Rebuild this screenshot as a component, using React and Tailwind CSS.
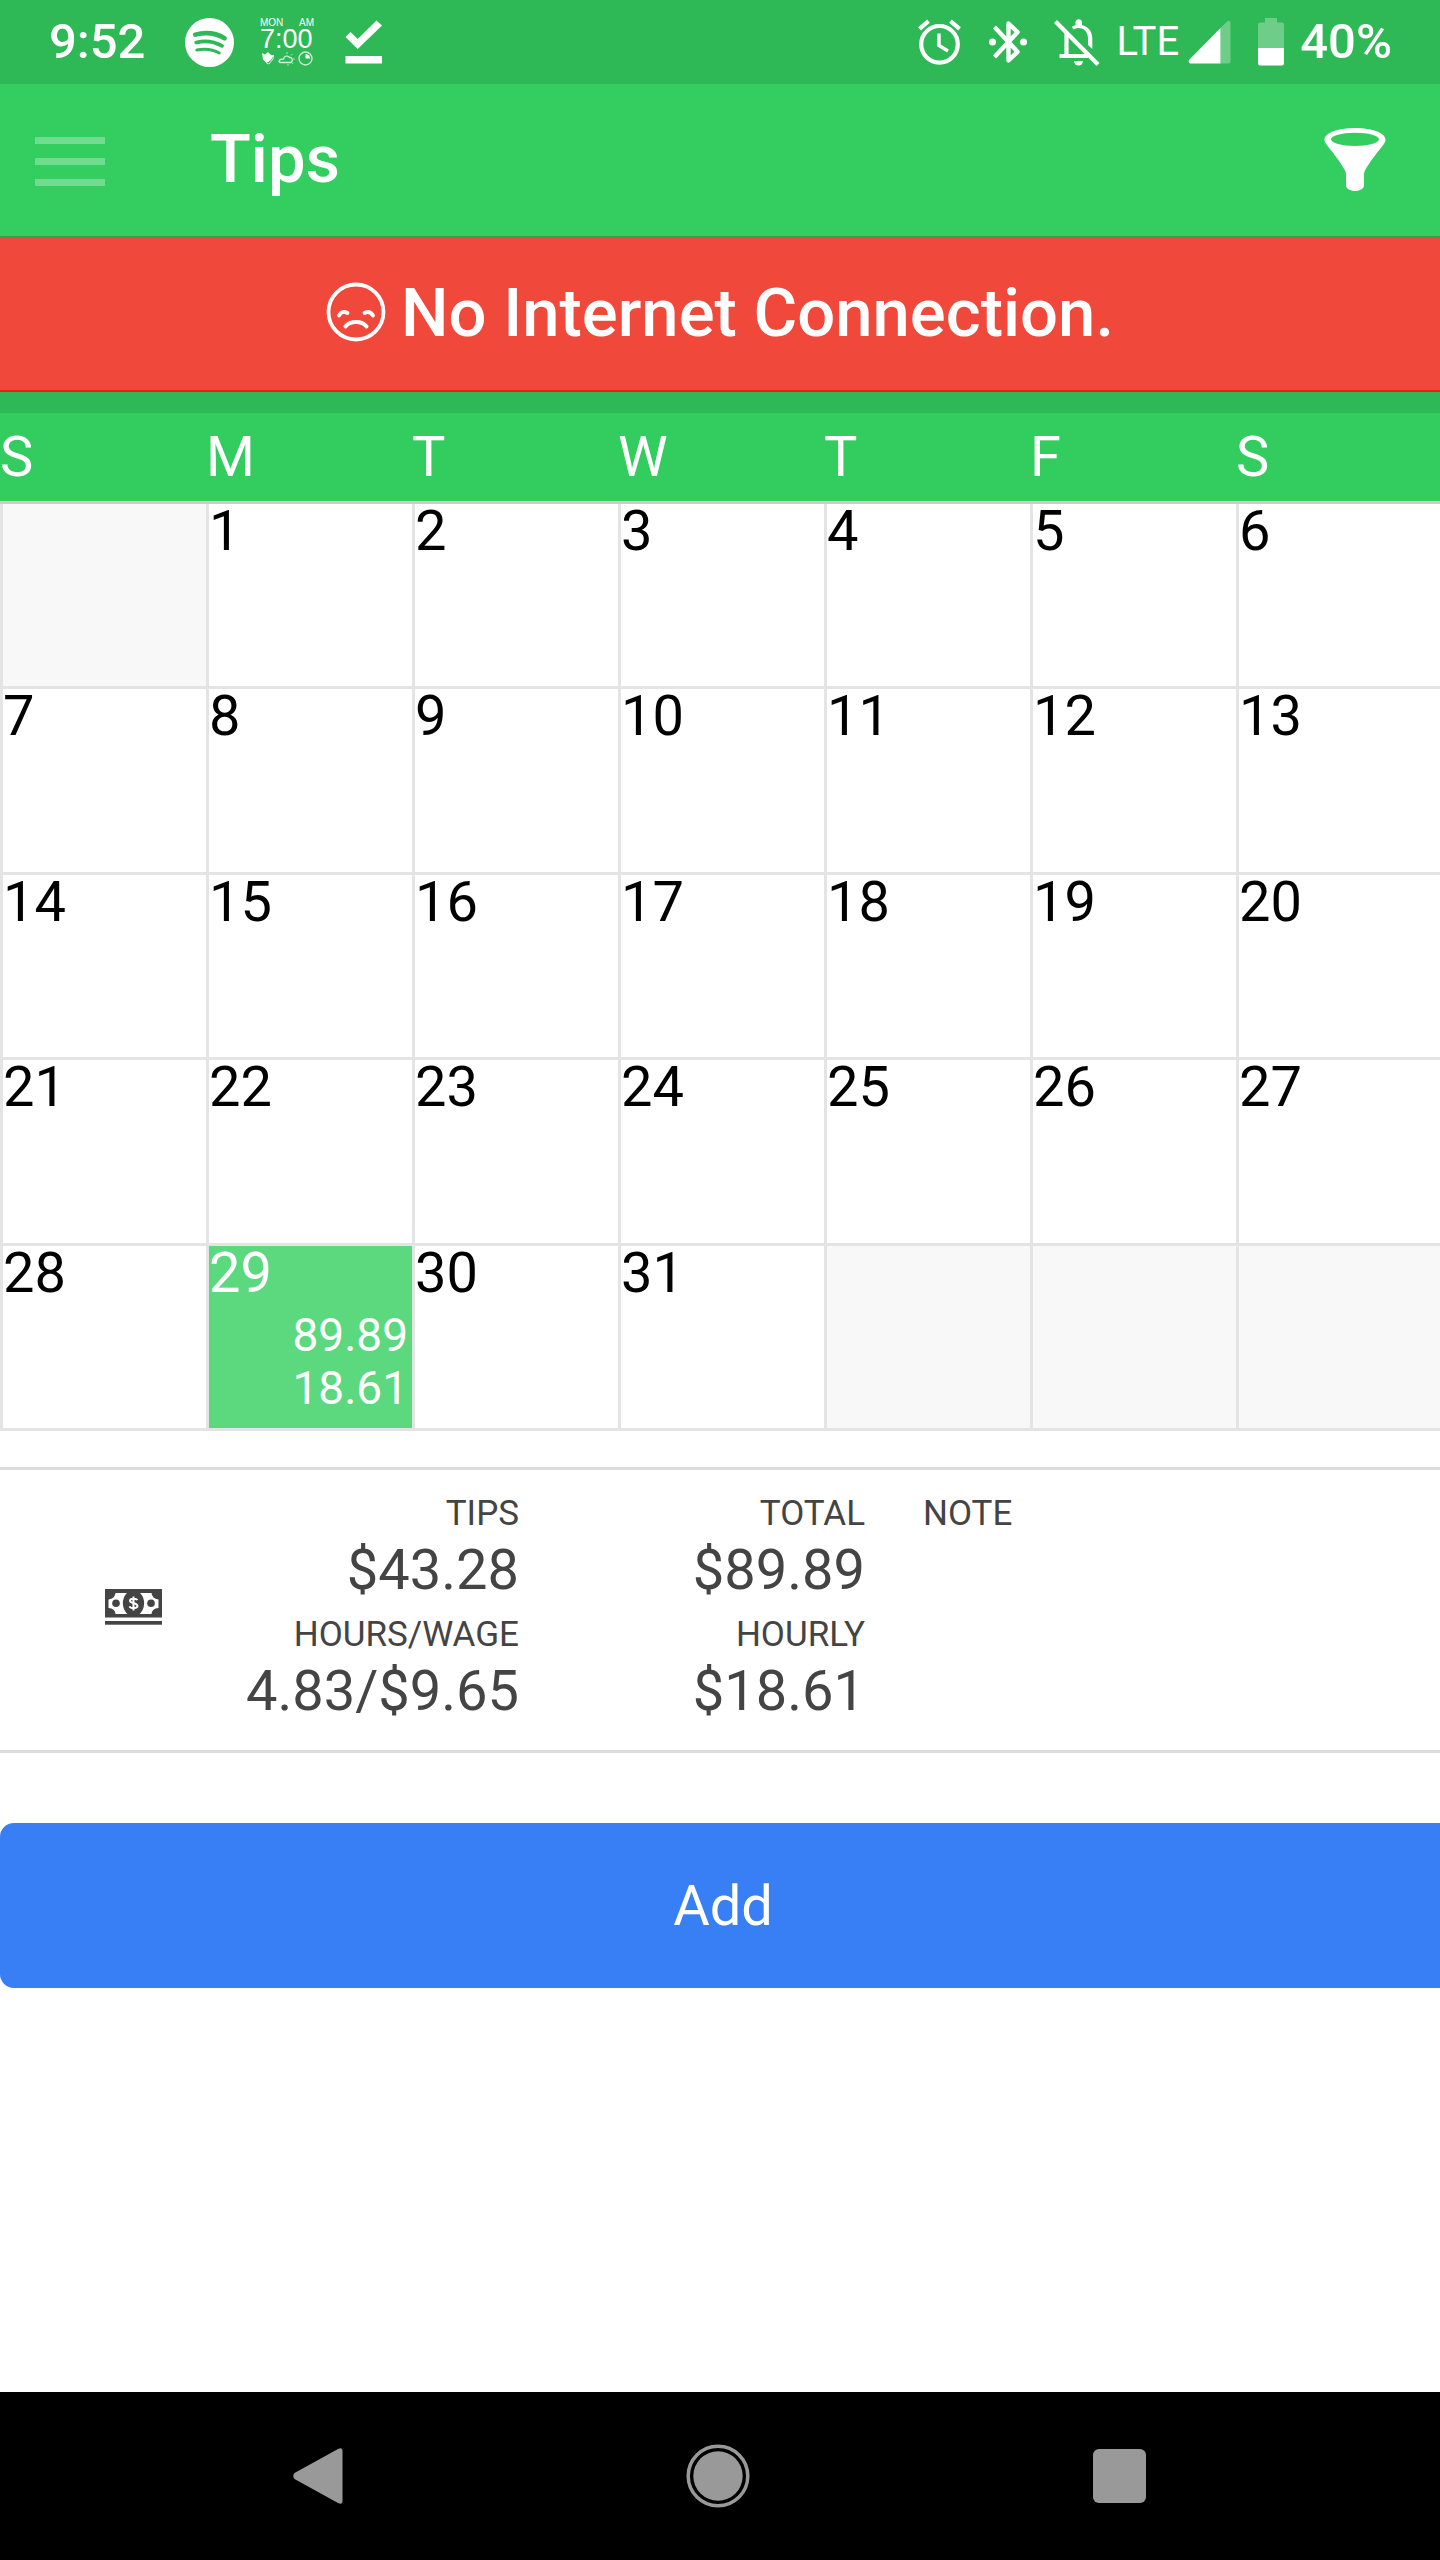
import React from "react";

const WEEKDAYS = [
  ["S", "Sunday"],
  ["M", "Monday"],
  ["T", "Tuesday"],
  ["W", "Wednesday"],
  ["T", "Thursday"],
  ["F", "Friday"],
  ["S", "Saturday"],
];

const WEEKS = [
  [null, 1, 2, 3, 4, 5, 6],
  [7, 8, 9, 10, 11, 12, 13],
  [14, 15, 16, 17, 18, 19, 20],
  [21, 22, 23, 24, 25, 26, 27],
  [28, 29, 30, 31, null, null, null],
];

const ENTRIES = { 29: { total: "89.89", hourly: "18.61" } };

function SpotifyIcon() {
  return (
    <svg width="49" height="49" viewBox="0 0 49 49" aria-hidden="true">
      <circle cx="24.5" cy="24.5" r="24.5" fill="#fff" />
      <g fill="none" stroke="#2eb856" strokeLinecap="round">
        <path d="M10.200 16.600C20 14 31 15 39.600 20.200" strokeWidth="4.600" />
        <path d="M11.300 24.500C20 22.200 29 23.300 37 27.800" strokeWidth="3.800" />
        <path d="M11.900 32C20 30.300 27 30.800 34.300 35" strokeWidth="3" />
      </g>
    </svg>
  );
}

function ClockWidgetIcon() {
  return (
    <div className="flex w-[54px] flex-col font-['Liberation_Sans',sans-serif] text-white">
      <div className="flex justify-between text-[10px] leading-[10px]">
        <span>MON</span>
        <span>AM</span>
      </div>
      <span className="text-[27px] leading-[23px]">7:00</span>
      <svg width="54" height="16" viewBox="0 0 54 16" aria-hidden="true">
        <path d="M2 2L5 3.500L8 1L11 4L13.500 4.500L11 9L6.500 12L3 8.500Z" fill="#fff" />
        <path d="M13.500 4L13 8L9 13L6.500 12" fill="none" stroke="#fff" strokeOpacity=".8" />
        <path d="M19 10.500C19.500 8 22 8 23.500 8C24 5 28 4 29.500 6.500C33 6 33 11 30.500 11.500H20Z" fill="none" stroke="#fff" strokeOpacity=".8" strokeWidth="1.300" />
        <path d="M27 3V1M31 4.500L32.500 3M33 8H35M31.500 11.500L33 13M28 13V15" stroke="#fff" strokeOpacity=".6" />
        <circle cx="45.500" cy="7.500" r="6.500" fill="none" stroke="#fff" strokeOpacity=".75" strokeWidth="1.400" />
        <path d="M45.500 7.500V3A4.500 4.500 0 0 1 50 7.500Z" fill="#fff" />
      </svg>
    </div>
  );
}

function CheckIcon() {
  return (
    <svg width="38" height="44" viewBox="0 0 38 44" aria-hidden="true">
      <path d="M0.500 17L5.500 12L12.700 19L31.500 0.500L37 5.500L12.700 29Z" fill="#fff" />
      <rect x="0.500" y="36" width="36.500" height="7.500" fill="#fff" />
    </svg>
  );
}

function AlarmIcon() {
  return (
    <svg width="43" height="46" viewBox="0 0 43 46" fill="none" stroke="#fff" aria-hidden="true">
      <circle cx="21.500" cy="25.300" r="18.300" strokeWidth="4.200" />
      <path d="M21 14.500V26.500L30 32" strokeWidth="3.400" />
      <path d="M1.500 9.800L10.500 2.200M41.500 9.800L32.500 2.200" strokeWidth="4.200" />
    </svg>
  );
}

function BluetoothIcon() {
  return (
    <svg width="38" height="46" viewBox="0 0 38 46" aria-hidden="true">
      <path d="M5.500 8L28.500 32.800L19.500 41.500V4.500L28.500 13.200L5.500 38" fill="none" stroke="#fff" strokeWidth="4.400" strokeLinejoin="round" />
      <circle cx="3.500" cy="23" r="3.500" fill="#fff" />
      <circle cx="34.500" cy="23" r="3.500" fill="#fff" />
    </svg>
  );
}

function MutedBellIcon() {
  return (
    <svg width="46" height="48" viewBox="0 0 46 48" aria-hidden="true">
      <path d="M12.500 15V37.500M5.500 38H34" fill="none" stroke="#fff" strokeWidth="4.200" />
      <path d="M18 9C17 9 20.500 7.500 21.500 7V4A3.300 3.300 0 0 1 28 4V7C35 9 38.300 14 38.300 20.500V31L34 27V20.500C34 13 29 10 24.500 10C22 10 21 11 19.500 11.500Z" fill="#fff" />
      <path d="M20 43H29A4.500 4.500 0 0 1 20 43Z" fill="#fff" />
      <path d="M1.500 3.500L44 46.500" stroke="#fff" strokeWidth="4.200" />
    </svg>
  );
}

function SignalIcon() {
  return (
    <svg width="43" height="44" viewBox="0 0 43 44" aria-hidden="true">
      <path d="M32.500 8L39 1.500C40.500 0 42.500 0.500 42.500 3V41.500Q42.500 43.500 40.500 43.500H32.500Z" fill="#fff" fillOpacity=".3" />
      <path d="M3 43.500C0.500 43.500 0 41 1.500 39.500L32.500 8V43.500Z" fill="#fff" />
    </svg>
  );
}

function BatteryIcon() {
  return (
    <svg width="26" height="48" viewBox="0 0 26 48" aria-hidden="true">
      <path d="M7 0H19V4.500H24Q26 4.500 26 6.500V30H0V6.500Q0 4.500 2 4.500H7Z" fill="#fff" fillOpacity=".3" />
      <path d="M0 30H26V45.500Q26 47.500 24 47.500H2Q0 47.500 0 45.500Z" fill="#fff" />
    </svg>
  );
}

function FunnelIcon() {
  return (
    <svg width="62" height="63" viewBox="0 0 62 63" aria-hidden="true">
      <path
        fill="#fff"
        fillRule="evenodd"
        d="M31 0C48 0 61.500 5 61.500 11.500C61.500 14 60 16 58 18.500C52 26 45 35 41 42.500C40.300 44 40 45 40 46.500V57C40 60.500 36 63 31 63S22 60.500 22 57V46.500C22 45 21.700 44 21 42.500C17 35 10 26 4 18.500C2 16 0.500 14 0.500 11.500C0.500 5 14 0 31 0ZM31 4.700C17.500 4.700 7 7.700 7 11.300S17.500 18 31 18S55 15 55 11.300S44.500 4.700 31 4.700Z"
      />
    </svg>
  );
}

function SadIcon() {
  return (
    <svg width="60" height="60" viewBox="0 0 60 60" fill="none" stroke="#fff" strokeLinecap="round" aria-hidden="true">
      <circle cx="30" cy="30" r="27.500" strokeWidth="3.800" />
      <path d="M13 33.500C15 30 18 29 21.500 31" strokeWidth="3.800" />
      <path d="M47 33.500C45 30 42 29 38.500 31" strokeWidth="3.800" />
      <path d="M19.500 44.500C24 38.500 36 38.500 40.500 44.500" strokeWidth="4" />
    </svg>
  );
}

function CashIcon() {
  return (
    <svg width="57" height="36" viewBox="0 0 57 36" aria-label="Cash" role="img">
      <rect width="57" height="28.500" fill="#444" />
      <path d="M10.500 4H46.500Q47 9.500 53.500 10.500V19Q47 19.500 46.500 25H10.500Q10 19.500 3.500 19V10.500Q10 9.500 10.500 4Z" fill="#fff" />
      <ellipse cx="28.500" cy="14.300" rx="10.600" ry="13" fill="#444" />
      <circle cx="11" cy="14.300" r="3.800" fill="#444" />
      <circle cx="46" cy="14.300" r="3.800" fill="#444" />
      <path d="M32.300 11.200C31.500 9.300 25 8.800 25 11.800C25 15 32.500 13.300 32.500 16.800C32.500 20 25.500 19.700 24.500 17.300M28.500 7.500V21.500" fill="none" stroke="#fff" strokeWidth="2" />
      <rect y="32" width="57" height="3.700" fill="#444" />
    </svg>
  );
}

function StatusBar() {
  return (
    <div className="flex h-[84px] items-center justify-between bg-[#2eb856] pr-[48px] pl-[49px] text-white">
      <div className="flex items-center">
        <span className="w-[136px] text-[49px] leading-[60px] font-medium">9:52</span>
        <SpotifyIcon />
        <div className="ml-[26px]">
          <ClockWidgetIcon />
        </div>
        <div className="ml-[31px]">
          <CheckIcon />
        </div>
      </div>
      <div className="flex items-center">
        <AlarmIcon />
        <div className="ml-[28px]">
          <BluetoothIcon />
        </div>
        <div className="ml-[27px]">
          <MutedBellIcon />
        </div>
        <span className="ml-[16px] text-[40px] leading-[60px]">LTE</span>
        <div className="ml-[9px]">
          <SignalIcon />
        </div>
        <div className="ml-[27px]">
          <BatteryIcon />
        </div>
        <span className="ml-[16px] text-[49px] leading-[60px] font-medium">40%</span>
      </div>
    </div>
  );
}

function DayCell({ day }) {
  const entry = ENTRIES[day];
  if (day === null) {
    return <td className="border-b-[3px] border-l-[3px] border-[#e4e4e4] bg-[#f8f8f8]" />;
  }
  if (entry) {
    return (
      <td className="border-b-[3px] border-l-[3px] border-[#e4e4e4] bg-[#5cd97f] bg-clip-padding p-0 align-top text-white">
        <div className="text-[56px] leading-[54px]">{day}</div>
        <div className="pt-[9px] pr-[4px] text-right text-[46px] leading-[53px]">
          <div>{entry.total}</div>
          <div>{entry.hourly}</div>
        </div>
      </td>
    );
  }
  return (
    <td className="border-b-[3px] border-l-[3px] border-[#e4e4e4] p-0 align-top text-[56px] leading-[54px] text-black">
      {day}
    </td>
  );
}

function Calendar() {
  return (
    <div className="overflow-hidden">
      <div className="-mr-[2px]">
        <table className="w-full table-fixed border-separate border-spacing-0">
          <thead>
            <tr className="h-[91px]">
              {WEEKDAYS.map(([letter, name], i) => (
                <th
                  key={i}
                  scope="col"
                  abbr={name}
                  className="border-b-[3px] border-[#ccc] bg-[#33cd5f] bg-clip-padding p-0 text-left text-[56px] leading-[66px] font-normal text-white"
                >
                  {letter}
                </th>
              ))}
            </tr>
          </thead>
          <tbody>
            {WEEKS.map((week, w) => (
              <tr key={w} className="h-[185px] even:h-[186px]">
                {week.map((day, d) => (
                  <DayCell key={d} day={day} />
                ))}
              </tr>
            ))}
          </tbody>
        </table>
      </div>
    </div>
  );
}

function Figure({ label, value }) {
  return (
    <div>
      <dt className="text-[35px] leading-[42px]">{label}</dt>
      <dd className="text-[56px] leading-[71px]">{value}</dd>
    </div>
  );
}

function Summary() {
  return (
    <section className="mt-[36px] flex items-center border-y-[3px] border-[#ddd] bg-white pt-[23px] pb-[23px] text-[#444]">
      <div className="flex w-[173px] shrink-0 justify-end pr-[11px] pb-[7px]">
        <CashIcon />
      </div>
      <dl className="flex w-[346px] flex-col gap-[8px] text-right">
        <Figure label="TIPS" value="$43.28" />
        <Figure label="HOURS/WAGE" value="4.83/$9.65" />
      </dl>
      <dl className="flex w-[346px] flex-col gap-[8px] text-right">
        <Figure label="TOTAL" value="$89.89" />
        <Figure label="HOURLY" value="$18.61" />
      </dl>
      <div className="ml-[58px] flex-1 self-start text-[35px] leading-[42px]">NOTE</div>
    </section>
  );
}

function NavBar() {
  return (
    <nav className="flex h-[168px] items-center justify-center gap-[343px] bg-black pr-[2px]">
      <button type="button" aria-label="Back">
        <svg width="50" height="58" viewBox="0 0 50 58" aria-hidden="true">
          <path d="M1.500 26L45 2Q49.500 0 49.500 4V54Q49.500 58 45 56L1.500 32Q-1 29 1.500 26Z" fill="#999" />
        </svg>
      </button>
      <button type="button" aria-label="Home">
        <svg width="64" height="64" viewBox="0 0 64 64" aria-hidden="true">
          <circle cx="32" cy="32" r="29.800" fill="none" stroke="#999" strokeWidth="3.500" />
          <circle cx="32" cy="32" r="24.700" fill="#999" />
        </svg>
      </button>
      <button type="button" aria-label="Recent apps">
        <svg width="53" height="54" viewBox="0 0 53 54" aria-hidden="true">
          <rect width="53" height="54" rx="6" fill="#999" />
        </svg>
      </button>
    </nav>
  );
}

export default function App() {
  return (
    <div className="flex min-h-screen flex-col overflow-hidden bg-white font-[Roboto,sans-serif]">
      <StatusBar />
      <header className="flex h-[154px] items-center border-b-2 border-[#28a54c] bg-[#34ce60] pr-[54px] pb-[2px] pl-[35px] text-white">
        <button type="button" aria-label="Menu" className="flex w-[70px] flex-col gap-[14px] pt-[4px]">
          <span className="h-[7px] w-full bg-[#71dc90]" />
          <span className="h-[7px] w-full bg-[#71dc90]" />
          <span className="h-[7px] w-full bg-[#71dc90]" />
        </button>
        <h1 className="ml-[105px] flex-1 text-[67px] leading-[80px] font-medium">Tips</h1>
        <button type="button" aria-label="Filter">
          <FunnelIcon />
        </button>
      </header>
      <div
        role="alert"
        className="flex h-[154px] items-center justify-center gap-[15px] border-b-2 border-[#e42112] bg-[#f0483b] pb-[2px] text-white"
      >
        <div className="pb-[2px]">
          <SadIcon />
        </div>
        <span className="text-[67px] leading-[80px] font-medium">No Internet Connection.</span>
      </div>
      <div className="h-[21px] bg-[#2eb856]" />
      <main className="flex-1">
        <Calendar />
        <Summary />
        <button
          type="button"
          className="mt-[70px] h-[165px] w-[calc(100%+6px)] rounded-l-[14px] bg-[#387ff5] text-[56px] leading-[66px] text-white"
        >
          Add
        </button>
      </main>
      <NavBar />
    </div>
  );
}
